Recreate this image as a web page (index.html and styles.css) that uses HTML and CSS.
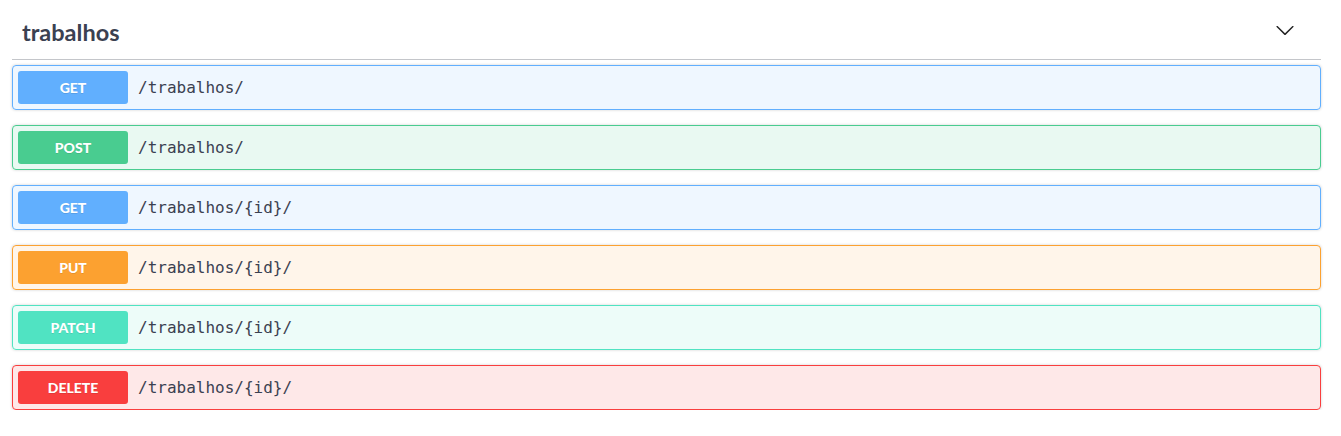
FILE: index.html
```html
<!DOCTYPE html>
<html lang="pt">
<head>
<meta charset="utf-8">
<title>trabalhos</title>
<link rel="stylesheet" href="styles.css">
</head>
<body>
<div class="wrapper">
  <div class="tag-section">
    <h3 class="tag">
      <span class="tag-name">trabalhos</span>
      <button class="expand" aria-label="collapse">
        <svg width="20" height="20" viewBox="0 0 20 20"><path d="M17.418 6.109c.272-.268.709-.268.979 0s.271.701 0 .969l-7.908 7.83c-.27.268-.707.268-.979 0l-7.908-7.830c-.27-.268-.27-.701 0-.969.271-.268.709-.268.979 0L10 13.25l7.418-7.141z" fill="#222"/></svg>
      </button>
    </h3>
    <div class="ops">
      <div class="op op-get"><span class="method">GET</span><span class="path">/trabalhos/</span></div>
      <div class="op op-post"><span class="method">POST</span><span class="path">/trabalhos/</span></div>
      <div class="op op-get"><span class="method">GET</span><span class="path">/trabalhos/{id}/</span></div>
      <div class="op op-put"><span class="method">PUT</span><span class="path">/trabalhos/{id}/</span></div>
      <div class="op op-patch"><span class="method">PATCH</span><span class="path">/trabalhos/{id}/</span></div>
      <div class="op op-delete"><span class="method">DELETE</span><span class="path">/trabalhos/{id}/</span></div>
    </div>
  </div>
</div>
</body>
</html>
```
FILE: styles.css
```css
html, body {
  margin: 0;
  padding: 0;
  background: #fff;
}
.wrapper {
  padding: 0 20px 0 12px;
}
.tag {
  display: flex;
  align-items: center;
  justify-content: space-between;
  height: 60px;
  box-sizing: border-box;
  margin: 0 0 5px;
  padding: 0 0 0 10px;
  border-bottom: 1px solid rgba(59, 65, 81, 0.3);
  font-family: "Lato", "Open Sans", sans-serif;
  font-weight: 700;
  font-size: 23.5px;
  color: #3b4151;
}
.tag-name {
  margin-top: 4px;
}
.expand {
  border: none;
  background: none;
  padding: 0;
  margin: 0 26px 0 0;
  display: flex;
  cursor: pointer;
}
.ops {
  display: flex;
  flex-direction: column;
  gap: 15px;
}
.op {
  display: flex;
  align-items: center;
  height: 45px;
  box-sizing: border-box;
  padding: 0 5px;
  border: 1px solid;
  border-radius: 4px;
  box-shadow: 0 0 3px rgba(0, 0, 0, 0.19);
}
.method {
  width: 110px;
  height: 33px;
  display: flex;
  align-items: center;
  justify-content: center;
  border-radius: 3px;
  color: #fff;
  font-family: "Lato", "Open Sans", sans-serif;
  font-weight: 900;
  font-size: 14px;
  text-shadow: 0 1px 0 rgba(0, 0, 0, 0.1);
}
.path {
  padding: 0 10px;
  font-family: "DejaVu Sans Mono", monospace;
  font-size: 16px;
  color: #3b4151;
}
.op-get { background: rgba(97, 175, 254, 0.1); border-color: #61affe; }
.op-get .method { background: #61affe; }
.op-post { background: rgba(73, 204, 144, 0.12); border-color: #49cc90; }
.op-post .method { background: #49cc90; }
.op-put { background: rgba(252, 161, 48, 0.1); border-color: #fca130; }
.op-put .method { background: #fca130; }
.op-patch { background: rgba(80, 227, 194, 0.1); border-color: #50e3c2; }
.op-patch .method { background: #50e3c2; }
.op-delete { background: rgba(249, 62, 62, 0.12); border-color: #f93e3e; }
.op-delete .method { background: #f93e3e; }
```
